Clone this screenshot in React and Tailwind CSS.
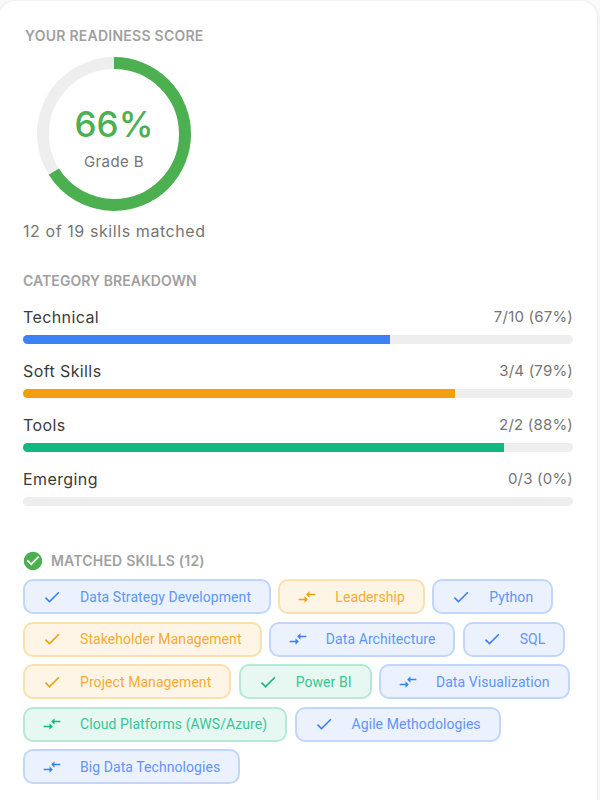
import React from 'react';

const categories = [
    { name: 'Technical', value: '7/10 (67%)', width: 'w-[66.7%]', bar: 'bg-[#3b82f6]' },
    { name: 'Soft Skills', value: '3/4 (79%)', width: 'w-[78.6%]', bar: 'bg-[#f59e0b]' },
    { name: 'Tools', value: '2/2 (88%)', width: 'w-[87.5%]', bar: 'bg-[#10b981]' },
    { name: 'Emerging', value: '0/3 (0%)', width: 'w-0', bar: 'bg-[#3b82f6]' },
];

const chipStyles = {
    blue: { chip: 'bg-[#ebf2fe] border-[#c0d6fc] text-[#5f95f8]', icon: 'text-[#3b82f6]' },
    orange: { chip: 'bg-[#fef5e6] border-[#fcdfae] text-[#f7ab31]', icon: 'text-[#f59e0b]' },
    green: { chip: 'bg-[#e7f8f2] border-[#b5e9d6] text-[#38c595]', icon: 'text-[#10b981]' },
};

const skills = [
    { label: 'Data Strategy Development', color: 'blue', icon: 'check' },
    { label: 'Leadership', color: 'orange', icon: 'compare' },
    { label: 'Python', color: 'blue', icon: 'check' },
    { label: 'Stakeholder Management', color: 'orange', icon: 'check' },
    { label: 'Data Architecture', color: 'blue', icon: 'compare' },
    { label: 'SQL', color: 'blue', icon: 'check' },
    { label: 'Project Management', color: 'orange', icon: 'check' },
    { label: 'Power BI', color: 'green', icon: 'check' },
    { label: 'Data Visualization', color: 'blue', icon: 'compare' },
    { label: 'Cloud Platforms (AWS/Azure)', color: 'green', icon: 'compare' },
    { label: 'Agile Methodologies', color: 'blue', icon: 'check' },
    { label: 'Big Data Technologies', color: 'blue', icon: 'compare' },
];

const iconPaths = {
    check: 'M9 16.17 4.83 12l-1.41 1.41L9 19 21 7l-1.41-1.41z',
    compare: 'M9.01 14H2v2h7.01v3L13 15l-3.99-4v3zm5.98-1v-3H22V8h-7.01V5L11 9l3.99 4z',
};

function ScoreRing() {
    return (
        <div className="relative ml-3.5 mt-[11px] w-[154px] h-[154px]">
            <svg width="154" height="154" viewBox="0 0 154 154" className="-rotate-90">
                <circle cx="77" cy="77" r="71" fill="none" stroke="#eeeeee" strokeWidth="12" />
                <circle cx="77" cy="77" r="71" fill="none" stroke="#4caf50" strokeWidth="12" strokeDasharray="294.4 446.1" />
            </svg>
            <div className="absolute inset-0 pt-[5px] flex flex-col items-center justify-center font-['Inter',sans-serif]">
                <span className="text-[35px] leading-[44px] font-medium text-[#4caf50]">66%</span>
                <span className="mt-[6px] text-[15px] leading-5 tracking-[0.4px] text-[#757575]">Grade B</span>
            </div>
        </div>
    );
}

function Chip({ label, color, icon }) {
    const style = chipStyles[color];
    return (
        <div className={`flex items-center h-[35px] pl-[17px] pr-[18px] rounded-[10px] border-2 ${style.chip}`}>
            <svg viewBox="0 0 24 24" className={`w-[20px] h-[20px] fill-current ${style.icon}`}>
                <path d={iconPaths[icon]} />
            </svg>
            <span className="ml-[18px] font-['Roboto',sans-serif] text-sm leading-5 tracking-[0.07px] whitespace-nowrap">{label}</span>
        </div>
    );
}

export default function App() {
    return (
        <div className="w-[600px] h-[800px] overflow-hidden bg-[#fafafa]">
            <div className="w-[598px] h-[830px] -ml-px mt-px pl-6 pr-6 pt-[25px] bg-white rounded-2xl shadow-[0_1px_4px_rgba(0,0,0,0.12)] font-['Inter',sans-serif]">
                <h2 className="ml-0.5 text-sm leading-5 font-semibold tracking-[0.25px] text-[#a0a0a0]">YOUR READINESS SCORE</h2>
                <ScoreRing />
                <p className="mt-[8px] text-base leading-6 tracking-[0.58px] text-[#757575]">12 of 19 skills matched</p>

                <h3 className="mt-[28px] text-sm leading-5 font-semibold tracking-[0.06px] text-[#a0a0a0]">CATEGORY BREAKDOWN</h3>
                <div className="mt-[14px] flex flex-col gap-[14.7px]">
                    {categories.map((c) => (
                        <div key={c.name} className="w-[550px]">
                            <div className="flex justify-between items-center h-[24px] mb-[6px]">
                                <span className="text-base tracking-[0.4px] text-[#3a3a3a]">{c.name}</span>
                                <span className="text-[15px] tracking-[0.2px] text-[#757575]">{c.value}</span>
                            </div>
                            <div className="h-[9.3px] rounded-full bg-[#eeeeee] overflow-hidden">
                                <div className={`h-full ${c.width} ${c.bar}`}></div>
                            </div>
                        </div>
                    ))}
                </div>

                <div className="mt-[43.8px] flex items-center gap-[7px]">
                    <svg viewBox="0 0 24 24" className="w-[22px] h-[22px] -ml-px fill-[#4caf50]">
                        <path d="M12 2C6.48 2 2 6.48 2 12s4.48 10 10 10 10-4.48 10-10S17.52 2 12 2zm-2 15l-5-5 1.41-1.41L10 14.17l7.59-7.59L19 8l-9 9z" />
                    </svg>
                    <h3 className="text-sm leading-5 font-semibold tracking-[0.2px] text-[#a0a0a0]">MATCHED SKILLS (12)</h3>
                </div>
                <div className="mt-[7px] w-[552px] flex flex-wrap gap-x-[7.3px] gap-y-[7.5px]">
                    {skills.map((s) => (
                        <Chip key={s.label} {...s} />
                    ))}
                </div>
            </div>
        </div>
    );
}
